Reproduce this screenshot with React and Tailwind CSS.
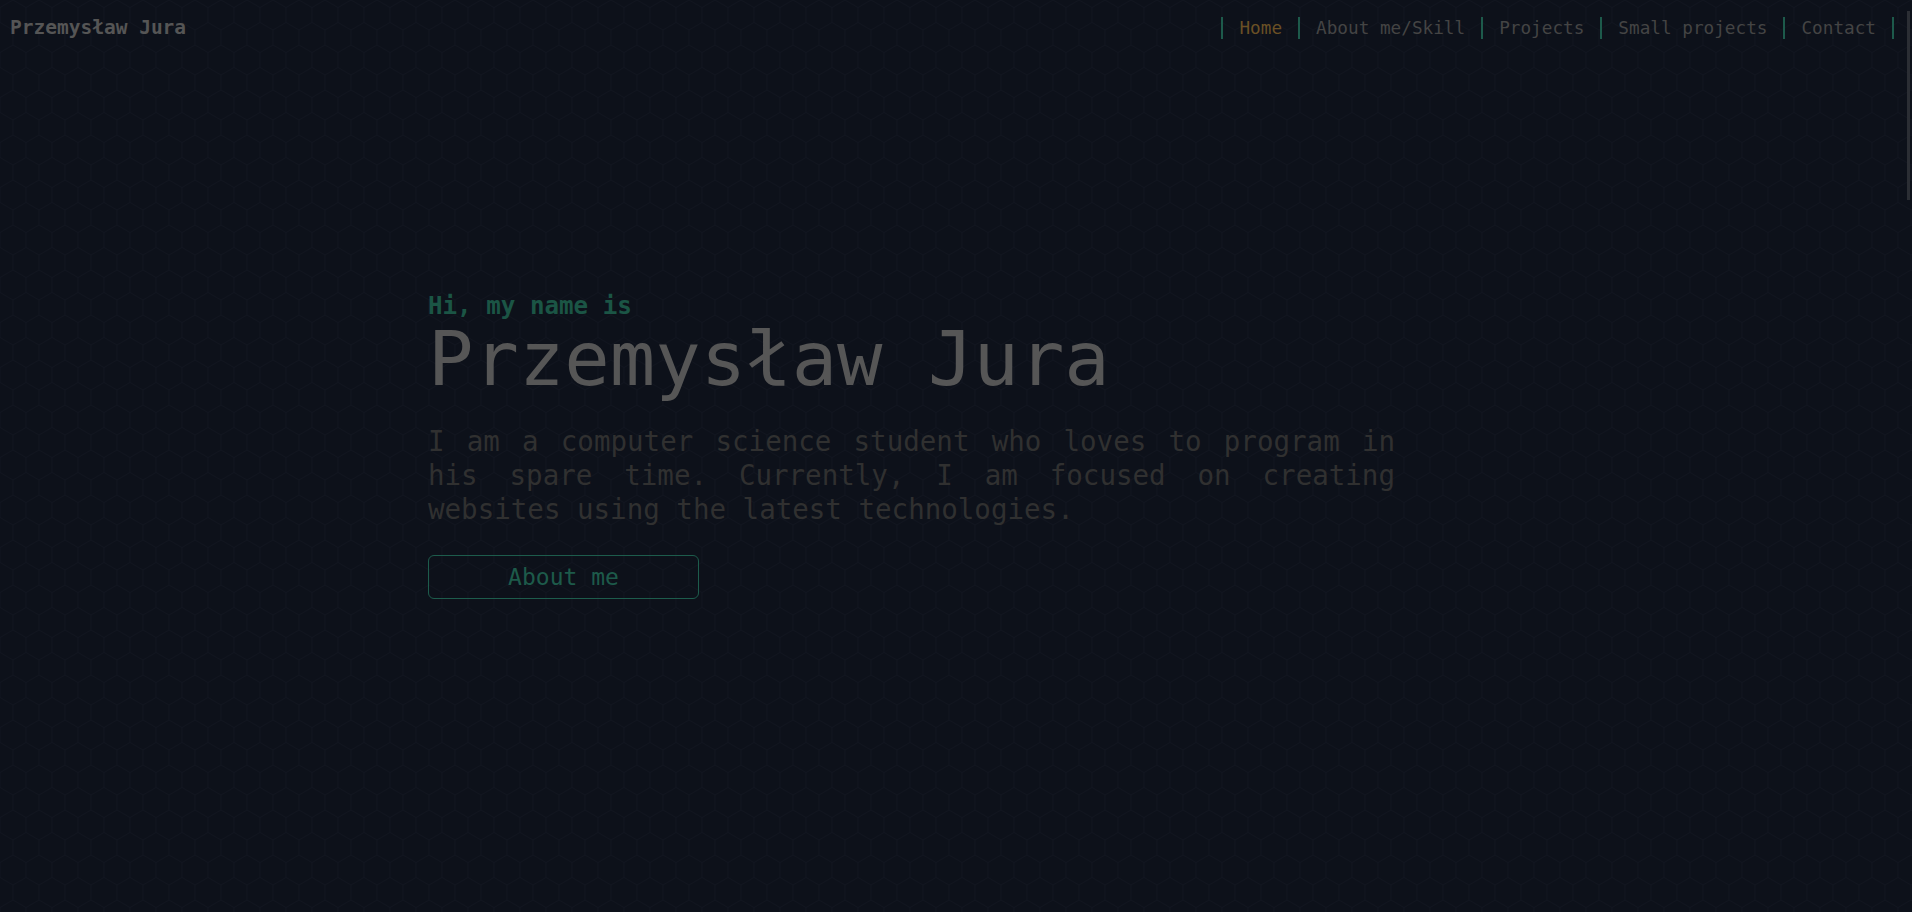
const navItems = [
  { label: "Home", active: true },
  { label: "About me/Skill" },
  { label: "Projects" },
  { label: "Small projects" },
  { label: "Contact" },
];

const HexBackground = () => (
  <svg className="absolute inset-0 w-full h-full pointer-events-none" aria-hidden="true">
    <defs>
      <pattern id="hex" width="26" height="45" patternUnits="userSpaceOnUse">
        <path
          d="M13 0 L26 7.5 L26 22.5 L13 30 L0 22.5 L0 7.5 Z M13 30 L13 45"
          fill="none"
          stroke="#11151f"
          strokeWidth="1"
        />
      </pattern>
    </defs>
    <rect width="100%" height="100%" fill="url(#hex)" />
  </svg>
);

const Navbar = () => {
  return (
    <header className="relative flex items-center justify-between h-14 pl-[10px] pr-[18px]">
      <div className="text-[19.5px] font-bold text-[#555555]">Przemysław Jura</div>
      <nav className="flex items-center">
        {navItems.map((item, i) => (
          <a
            key={item.label}
            href="#"
            className={
              "border-l-2 border-[#1d5a4b] px-4 text-[17.7px] leading-[22px] " +
              (item.active ? "text-[#6a5025] " : "text-[#444444] ") +
              (i === navItems.length - 1 ? "border-r-2" : "")
            }
          >
            {item.label}
          </a>
        ))}
      </nav>
    </header>
  );
};

const Hero = () => {
  return (
    <main className="relative pl-[428px] pt-[238px]">
      <p className="text-[24.2px] leading-[24px] font-semibold text-[#1b5545]">Hi, my name is</p>
      <h1 className="mt-[3px] text-[75.5px] leading-[76px] text-[#565656]">Przemysław Jura</h1>
      <p className="mt-[27px] w-[967px] text-[27.5px] leading-[34px] text-[#303030] text-justify">
        I am a computer science student who loves to program in his spare time. Currently, I am
        focused on creating websites using the latest technologies.
      </p>
      <button className="mt-[29px] w-[271px] h-[44px] rounded-md border border-[#1d5c4c] text-[23px] text-[#1d5a4a]">
        About me
      </button>
    </main>
  );
};

export default function App() {
  return (
    <div className="relative min-h-screen overflow-hidden bg-[#0d111a] font-['DejaVu_Sans_Mono','Liberation_Mono',monospace]">
      <HexBackground />
      <Navbar />
      <Hero />
      {/* scrollbar thumb */}
      <div className="absolute right-[2px] top-[11px] w-[3px] h-[189px] bg-[#2b2e34]" />
    </div>
  );
}
